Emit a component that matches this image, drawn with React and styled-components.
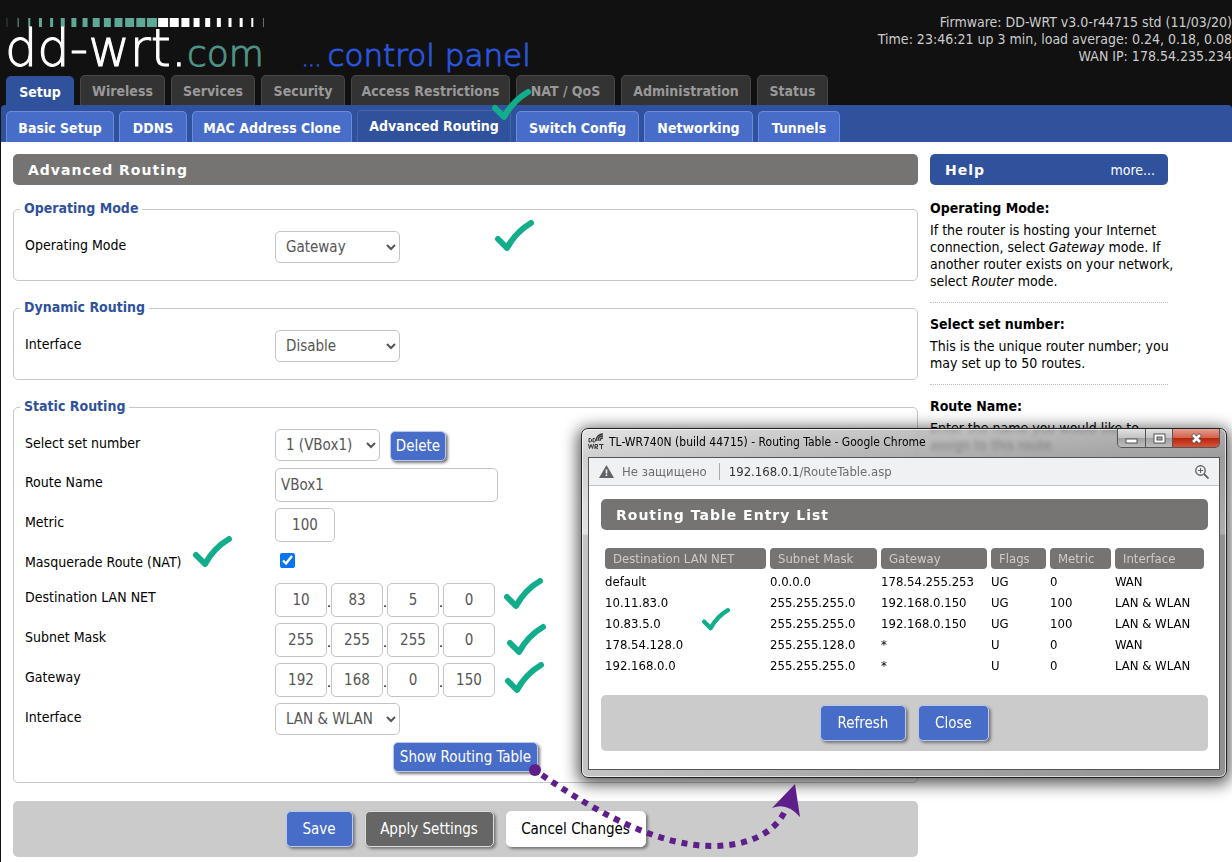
import React from "react";
import styled, { createGlobalStyle } from "styled-components";

const sans = `"DejaVu Sans Condensed", Tahoma, "DejaVu Sans", sans-serif`;
const blue = "#30519c";
const grey = "#757472";

const GlobalStyle = createGlobalStyle`
  *, *::before, *::after { box-sizing: border-box; }
  body {
    margin: 0;
    background: #111;
    color: #000;
    font-family: ${sans};
    font-size: 14px;
    line-height: 17px;
  }
  button, input, select { font-family: inherit; }
`;

const Page = styled.div`
  position: relative;
  min-height: 100vh;
  padding-left: 1px;
  overflow: hidden;
  display: flex;
  flex-direction: column;
`;

/* header */

const HeaderTop = styled.header`
  display: flex;
  justify-content: space-between;
  height: 75px;
`;

const Brand = styled.div`
  padding: 17px 0 0 4px;
  white-space: nowrap;
`;

const LogoBars = styled.svg`
  display: block;
`;

const LogoLine = styled.div`
  display: flex;
  align-items: baseline;
  height: 42px;
  line-height: 42px;
  font-family: "DejaVu Sans Light", "DejaVu Sans", sans-serif;
  font-weight: 200;
  -webkit-text-stroke: 1px;
`;

const LogoLink = styled.a`
  width: 297px;
  color: #fff;
  font-size: 51px;
  text-decoration: none;
`;

const LogoCom = styled.span`
  color: #4f9484;
  font-size: 36px;
`;

const LogoTag = styled.span`
  color: #2b55dd;
  font-size: 31px;
`;

const LogoDots = styled.span`
  font-size: 20px;
`;

const Firmware = styled.div`
  padding-top: 14px;
  color: #ccc;
  text-align: right;
  white-space: nowrap;
`;

const Tabs = styled.nav`
  display: flex;
  align-items: flex-end;
  gap: 6px;
  height: 30px;
  padding-left: 5px;
`;

const Tab = styled.a`
  width: ${(p) => p.$w}px;
  height: ${(p) => (p.$active ? 29 : 30)}px;
  border: 1px solid ${(p) => (p.$active ? blue : "#474747")};
  border-bottom: 0;
  border-radius: 5px 5px 0 0;
  background: ${(p) => (p.$active ? blue : "#333")};
  color: ${(p) => (p.$active ? "#fff" : "#999")};
  font-weight: bold;
  line-height: 31px;
  text-align: center;
  text-decoration: none;
  white-space: nowrap;
`;

const SubTabs = styled.nav`
  display: flex;
  align-items: flex-end;
  gap: 5px;
  height: 37px;
  padding-left: 5px;
  border-radius: 4px 4px 0 0;
  background: ${blue};
`;

const SubTab = styled.a`
  width: ${(p) => p.$w}px;
  height: ${(p) => (p.$active ? 32 : 31)}px;
  border: 1px solid ${(p) => (p.$active ? "#4765ad" : "#6c8bdb")};
  border-bottom: 0;
  border-radius: 5px 5px 0 0;
  background: ${(p) => (p.$active ? blue : "#486dc8")};
  color: #fff;
  font-weight: bold;
  line-height: ${(p) => (p.$active ? 31 : 33)}px;
  text-align: center;
  text-decoration: none;
  white-space: nowrap;
`;

/* body */

const Body = styled.div`
  flex: 1;
  display: flex;
  gap: 12px;
  padding: 12px 64px 5px 12px;
  background: #fff;
`;

const Main = styled.form`
  flex: 1;
  min-width: 0;
`;

const TitleBar = styled.h2`
  display: flex;
  justify-content: space-between;
  align-items: center;
  height: 31px;
  margin: 0;
  padding: 1px 13px 0 15px;
  border-radius: 5px;
  background: ${(p) => (p.$help ? blue : grey)};
  color: #fff;
  font-family: "DejaVu Sans", Verdana, sans-serif;
  font-size: 14px;
  letter-spacing: 1px;
`;

const MoreLink = styled.a`
  color: #fff;
  font-family: ${sans};
  font-weight: normal;
  letter-spacing: 0;
  text-decoration: none;
`;

const Group = styled.fieldset`
  min-width: 0;
  margin: ${(p) => (p.$first ? 15 : 18)}px 0 0;
  padding: 13px 11px ${(p) => (p.$tall ? 10 : 17)}px;
  border: 1px solid #c6c6c6;
  border-radius: 5px;
`;

const Legend = styled.legend`
  margin-left: -5px;
  padding: 0 4px 2px;
  color: ${blue};
  font-weight: bold;
  line-height: 16px;
`;

const Rows = styled.div`
  display: flex;
  flex-direction: column;
  gap: 6px;
`;

const Row = styled.div`
  display: flex;
  min-height: ${(p) => p.$h || 34}px;
`;

const RowLabel = styled.label`
  flex: 0 0 250px;
  padding-top: 5px;
  line-height: 18px;
`;

const Select = styled.select`
  width: ${(p) => p.$w || 125}px;
  height: 32px;
  padding: 0 0 0 6px;
  border: 1px solid #c4c4c4;
  border-radius: 5px;
  background-color: #fff;
  color: #555;
  font-size: 15px;
`;

const Input = styled.input`
  width: ${(p) => p.$w}px;
  height: 34px;
  padding: 0 5px;
  border: 1px solid #c4c4c4;
  border-radius: 5px;
  background: #fff;
  color: #555;
  font-size: 15px;
  text-align: ${(p) => (p.$center ? "center" : "left")};
`;

const Check = styled.input`
  width: 15px;
  height: 15px;
  margin: 5px 0 0 5px;
  accent-color: #0b75f0;
`;

const Dot = styled.span`
  width: 4px;
  padding-top: 11px;
`;

const Button = styled.button`
  width: ${(p) => p.$w}px;
  height: ${(p) => (p.$small ? 30 : 36)}px;
  margin: 0;
  padding: 0;
  border: 1px solid ${(p) => (p.$kind === "grey" ? "#ddd" : p.$kind === "white" ? "#fff" : "#b9c8ee")};
  border-radius: 5px;
  background: ${(p) => (p.$kind === "grey" ? "#666" : p.$kind === "white" ? "#fff" : "#486dc8")};
  box-shadow: 2px 2px 3px #777;
  color: ${(p) => (p.$kind === "white" ? "#000" : "#fff")};
  font-size: 15px;
  white-space: nowrap;
`;

const InlineButton = styled.div`
  padding: 2px 0 0 10px;
`;

const CenterRow = styled.div`
  display: flex;
  justify-content: center;
`;

const ButtonBar = styled.div`
  display: flex;
  justify-content: center;
  align-items: center;
  gap: 12px;
  height: 56px;
  margin-top: ${(p) => p.$gap}px;
  border-radius: 5px;
  background: #cbcbcb;
`;

/* help column */

const Help = styled.aside`
  flex: 0 0 238px;
`;

const HelpItem = styled.section`
  padding: 12px 0;
  border-bottom: 1px dotted #bbb;
  &:first-of-type { padding-top: 14px; }
  &:last-of-type { border-bottom: 0; }
`;

const HelpTitle = styled.h3`
  margin: 0 0 5px;
  font-size: 14px;
  line-height: 18px;
`;

const HelpText = styled.p`
  margin: 0 -10px 0 0;
`;

/* floating browser window */

const Window = styled.section`
  position: absolute;
  top: 428px;
  right: 5px;
  width: 646px;
  padding: 0 6px 7px;
  border: 1px solid #222;
  border-radius: 7px;
  background:
    linear-gradient(90deg, #ffffff44, #88888844 50%, #55555555),
    linear-gradient(#c8c8c8aa, #a8a8a8bb 28px, #d0d0d0cc 105px, #9c9c9ccc 106px, #9b9b9bcc);
  backdrop-filter: blur(2px);
  box-shadow: inset 0 0 0 1px #ffffffaa, 0 3px 16px 3px #000a;
`;

const WindowTitle = styled.div`
  display: flex;
  align-items: flex-start;
  height: 28px;
  line-height: 26px;
`;

const WindowIcon = styled.svg`
  margin: 4px 5px 0 0;
`;

const WindowName = styled.span`
  flex: 1;
  font-size: 12px;
`;

const WindowControls = styled.div`
  display: flex;
  height: 19px;
  border: 1px solid #555;
  border-top: 0;
  border-radius: 0 0 5px 5px;
  overflow: hidden;
`;

const WindowButton = styled.button`
  display: flex;
  align-items: center;
  justify-content: center;
  width: ${(p) => (p.$close ? 47 : 27)}px;
  height: 18px;
  padding: 0;
  border: 0;
  border-left: ${(p) => (p.$first ? 0 : 1)}px solid #555;
  background: ${(p) =>
    p.$close
      ? "linear-gradient(#e6a08f, #d1604a 9px, #b9230c 9px, #d5543a)"
      : "linear-gradient(#e2e2e2, #c2c2c2 9px, #a0a0a0 9px, #bdbdbd)"};
`;

const WindowPane = styled.div`
  border: 1px solid #555;
  background: #fff;
`;

const AddressBar = styled.div`
  display: flex;
  align-items: center;
  height: 28px;
  padding: 0 10px;
  border-bottom: 1px solid #c3c5c8;
  background: #f0f1f3;
  color: #6b6e72;
  font-size: 13px;
`;

const Insecure = styled.span`
  margin: 0 9px 0 8px;
  padding-right: 12px;
  border-right: 1px solid #aaa;
`;

const Host = styled.span`
  color: #333;
`;

const Url = styled.span`
  flex: 1;
`;

const PaneBody = styled.div`
  padding: 13px 11px 18px 12px;
`;

const Table = styled.table`
  width: 100%;
  margin: 15px 0 0;
  border-collapse: separate;
  border-spacing: 4px 3px;
  table-layout: fixed;
`;

const Th = styled.th`
  width: ${(p) => p.$w};
  height: 21px;
  padding: 0 0 0 8px;
  border-radius: 4px;
  background: ${grey};
  color: #ccc;
  font-size: 13px;
  font-weight: normal;
  text-align: left;
  white-space: nowrap;
`;

const Td = styled.td`
  height: 18px;
  padding: 2px 0 0;
  font-size: 13px;
  line-height: 16px;
  white-space: nowrap;
`;

/* hand-drawn marks over the page */

const Mark = styled.svg`
  position: absolute;
  left: ${(p) => p.$x}px;
  top: ${(p) => p.$y}px;
  pointer-events: none;
  overflow: visible;
`;

const greenBars = [1, 1, 2, 3, 3, 4, 5, 5, 7, 7, 8, 9, 9, 10];
const whiteBars = [10, 9, 8, 6, 5, 4, 3, 3, 2, 1];

const tabs = [
  ["Setup", 68], ["Wireless", 85], ["Services", 84], ["Security", 84],
  ["Access Restrictions", 159], ["NAT / QoS", 99], ["Administration", 130], ["Status", 71],
];

const subTabs = [
  ["Basic Setup", 108], ["DDNS", 68], ["MAC Address Clone", 160], ["Advanced Routing", 154],
  ["Switch Config", 123], ["Networking", 109], ["Tunnels", 82],
];

const addresses = [
  ["Destination LAN NET", ["10", "83", "5", "0"]],
  ["Subnet Mask", ["255", "255", "255", "0"]],
  ["Gateway", ["192", "168", "0", "150"]],
];

const columns = [
  ["Destination LAN NET", "161px"], ["Subnet Mask", "107px"], ["Gateway", "106px"],
  ["Flags", "55px"], ["Metric", "61px"], ["Interface", "auto"],
];

const routes = [
  ["default", "0.0.0.0", "178.54.255.253", "UG", "0", "WAN"],
  ["10.11.83.0", "255.255.255.0", "192.168.0.150", "UG", "100", "LAN & WLAN"],
  ["10.83.5.0", "255.255.255.0", "192.168.0.150", "UG", "100", "LAN & WLAN"],
  ["178.54.128.0", "255.255.128.0", "*", "U", "0", "WAN"],
  ["192.168.0.0", "255.255.255.0", "*", "U", "0", "LAN & WLAN"],
];

const marks = [
  [492, 89], [495, 220], [193, 536], [504, 578], [507, 624], [505, 662],
];

function Tick({ x, y, w = 39, h = 32 }) {
  return (
    <Mark $x={x} $y={y} width={w} height={h} viewBox="0 0 39 32" aria-hidden="true">
      <path
        d="M3 19 L12 28 C17 19 24 10 36 3"
        fill="none"
        stroke="#12ae8c"
        strokeWidth="6"
        strokeLinecap="round"
        strokeLinejoin="round"
      />
    </Mark>
  );
}

function Address({ label, parts }) {
  const id = label.replace(/ /g, "-").toLowerCase();
  return (
    <Row>
      <RowLabel htmlFor={id}>{label}</RowLabel>
      {parts.map((part, i) => (
        <React.Fragment key={i}>
          {i > 0 && <Dot>.</Dot>}
          <Input
            $w={52}
            $center
            id={i === 0 ? id : undefined}
            aria-label={`${label} ${i + 1}`}
            defaultValue={part}
          />
        </React.Fragment>
      ))}
    </Row>
  );
}

function RoutingWindow() {
  return (
    <Window>
      <WindowTitle>
        <WindowIcon width="16" height="17" viewBox="0 0 16 17" aria-hidden="true">
          <g fill="none" stroke="#333" strokeWidth="1">
            <path d="M8 8 C8 4 11 1 15 1 M10 8 C10 5 12 3 15 3 M12 8 C12 6 13 5 15 5" strokeWidth="1.300" />
            <path d="M1 5.500v3.500h1.500l1-1v-1.500l-1-1z M5 5.500v3.500h1.500l1-1v-1.500l-1-1z" />
            <path d="M.500 11l1 4.500 1.500-4 1.500 4 1-4.500 M7 16v-4.500h2.500v2.500h-2.500l3 2 M11 11.500h4.500 M13.500 11.500v4.500" />
          </g>
        </WindowIcon>
        <WindowName>TL-WR740N (build 44715) - Routing Table - Google Chrome</WindowName>
        <WindowControls>
          <WindowButton $first type="button" aria-label="Minimize">
            <svg width="13" height="11"><rect x="1" y="6" width="11" height="4" fill="#fff" stroke="#555" /></svg>
          </WindowButton>
          <WindowButton type="button" aria-label="Maximize">
            <svg width="13" height="11">
              <rect x="1" y="1" width="11" height="9" fill="#fff" stroke="#555" />
              <rect x="4" y="4" width="5" height="3" fill="#aaa" stroke="#555" />
            </svg>
          </WindowButton>
          <WindowButton $close type="button" aria-label="Close window">
            <svg width="13" height="11" viewBox="0 0 13 11">
              <path d="M2.500 1.500l8 8M10.500 1.500l-8 8" stroke="#555" strokeWidth="4" />
              <path d="M3 2l7 7M10 2l-7 7" stroke="#fff" strokeWidth="2.600" />
            </svg>
          </WindowButton>
        </WindowControls>
      </WindowTitle>
      <WindowPane>
        <AddressBar>
          <svg width="15" height="13" viewBox="0 0 15 13" aria-hidden="true">
            <path d="M7.500 0L15 13H0z" fill="#5f6368" />
            <path d="M7.500 4.500v4M7.500 9.500v1.500" stroke="#fff" strokeWidth="1.500" />
          </svg>
          <Insecure>Не защищено</Insecure>
          <Url><Host>192.168.0.1</Host>/RouteTable.asp</Url>
          <svg width="14" height="14" viewBox="0 0 14 14" fill="none" stroke="#5f6368" aria-hidden="true">
            <circle cx="5.500" cy="5.500" r="4.700" strokeWidth="1.400" />
            <path d="M9 9l4.500 4.500" strokeWidth="1.800" />
            <path d="M3 5.500h5M5.500 3v5" strokeWidth="1" />
          </svg>
        </AddressBar>
        <PaneBody>
          <TitleBar>Routing Table Entry List</TitleBar>
          <Table>
            <thead>
              <tr>{columns.map(([name, w]) => <Th key={name} $w={w}>{name}</Th>)}</tr>
            </thead>
            <tbody>
              {routes.map((route) => (
                <tr key={route[0]}>{route.map((cell, i) => <Td key={i}>{cell}</Td>)}</tr>
              ))}
            </tbody>
          </Table>
          <ButtonBar $gap={18}>
            <Button type="button" $w={86}>Refresh</Button>
            <Button type="button" $w={71}>Close</Button>
          </ButtonBar>
        </PaneBody>
      </WindowPane>
    </Window>
  );
}

export default function App() {
  return (
    <Page>
      <GlobalStyle />
      <HeaderTop>
        <Brand>
          <LogoBars width="262" height="11" aria-hidden="true">
            {greenBars.concat(whiteBars).map((w, i) => (
              <rect
                key={i}
                x={2 + i * 11.15 - w / 2}
                y="1"
                width={w}
                height="9"
                fill={i < greenBars.length ? "#5fa796" : "#fff"}
                opacity={i === 0 || i === 23 ? 0.4 : 1}
              />
            ))}
          </LogoBars>
          <LogoLine>
            <LogoLink href="#home">dd-wrt.<LogoCom>com</LogoCom></LogoLink>
            <LogoTag><LogoDots>... </LogoDots>control panel</LogoTag>
          </LogoLine>
        </Brand>
        <Firmware>
          <div>Firmware: DD-WRT v3.0-r44715 std (11/03/20)</div>
          <div>Time: 23:46:21 up 3 min, load average: 0.24, 0.18, 0.08</div>
          <div>WAN IP: 178.54.235.234</div>
        </Firmware>
      </HeaderTop>
      <Tabs>
        {tabs.map(([name, w], i) => (
          <Tab key={name} href="#tab" $w={w} $active={i === 0}>{name}</Tab>
        ))}
      </Tabs>
      <SubTabs>
        {subTabs.map(([name, w], i) => (
          <SubTab key={name} href="#subtab" $w={w} $active={i === 3}>{name}</SubTab>
        ))}
      </SubTabs>
      <Body>
        <Main onSubmit={(e) => e.preventDefault()}>
          <TitleBar>Advanced Routing</TitleBar>
          <Group $first>
            <Legend>Operating Mode</Legend>
            <Row $h={32}>
              <RowLabel htmlFor="mode">Operating Mode</RowLabel>
              <Select id="mode"><option>Gateway</option></Select>
            </Row>
          </Group>
          <Group>
            <Legend>Dynamic Routing</Legend>
            <Row $h={32}>
              <RowLabel htmlFor="dynamic">Interface</RowLabel>
              <Select id="dynamic"><option>Disable</option></Select>
            </Row>
          </Group>
          <Group $tall>
            <Legend>Static Routing</Legend>
            <Rows>
              <Row $h={33}>
                <RowLabel htmlFor="set">Select set number</RowLabel>
                <Select id="set" $w={105}><option>1 (VBox1)</option></Select>
                <InlineButton><Button type="button" $small $w={56}>Delete</Button></InlineButton>
              </Row>
              <Row>
                <RowLabel htmlFor="name">Route Name</RowLabel>
                <Input id="name" $w={223} defaultValue="VBox1" />
              </Row>
              <Row>
                <RowLabel htmlFor="metric">Metric</RowLabel>
                <Input id="metric" $w={60} $center defaultValue="100" />
              </Row>
              <Row $h={29}>
                <RowLabel htmlFor="nat">Masquerade Route (NAT)</RowLabel>
                <Check id="nat" type="checkbox" defaultChecked />
              </Row>
              {addresses.map(([label, parts]) => <Address key={label} label={label} parts={parts} />)}
              <Row $h={33}>
                <RowLabel htmlFor="iface">Interface</RowLabel>
                <Select id="iface"><option>LAN &amp; WLAN</option></Select>
              </Row>
              <CenterRow>
                <Button type="button" $small $w={145}>Show Routing Table</Button>
              </CenterRow>
            </Rows>
          </Group>
          <ButtonBar $gap={18}>
            <Button $w={67}>Save</Button>
            <Button type="button" $kind="grey" $w={129}>Apply Settings</Button>
            <Button type="reset" $kind="white" $w={140}>Cancel Changes</Button>
          </ButtonBar>
        </Main>
        <Help>
          <TitleBar $help>Help<MoreLink href="#more">more...</MoreLink></TitleBar>
          <HelpItem>
            <HelpTitle>Operating Mode:</HelpTitle>
            <HelpText>
              If the router is hosting your Internet connection, select <em>Gateway</em> mode. If
              another router exists on your network, select <em>Router</em> mode.
            </HelpText>
          </HelpItem>
          <HelpItem>
            <HelpTitle>Select set number:</HelpTitle>
            <HelpText>This is the unique router number; you may set up to 50 routes.</HelpText>
          </HelpItem>
          <HelpItem>
            <HelpTitle>Route Name:</HelpTitle>
            <HelpText>Enter the name you would like to assign to this route.</HelpText>
          </HelpItem>
        </Help>
      </Body>
      <RoutingWindow />
      {marks.map(([x, y]) => <Tick key={`${x}-${y}`} x={x} y={y} />)}
      <Tick x={702} y={608} w={28} h={23} />
      <Mark $x={529} $y={763} width="290" height="90" viewBox="529 763 290 90" aria-hidden="true">
        <circle cx="535" cy="770" r="6" fill="#5e1f8b" />
        <path
          d="M542 775 C600 815 660 846 712 846 C750 846 775 832 785 811"
          fill="none"
          stroke="#5e1f8b"
          strokeWidth="6"
          strokeDasharray="6 6"
        />
        <path d="M795 784 L800 817 Q787 802 772 808 Z" fill="#5e1f8b" />
      </Mark>
    </Page>
  );
}
